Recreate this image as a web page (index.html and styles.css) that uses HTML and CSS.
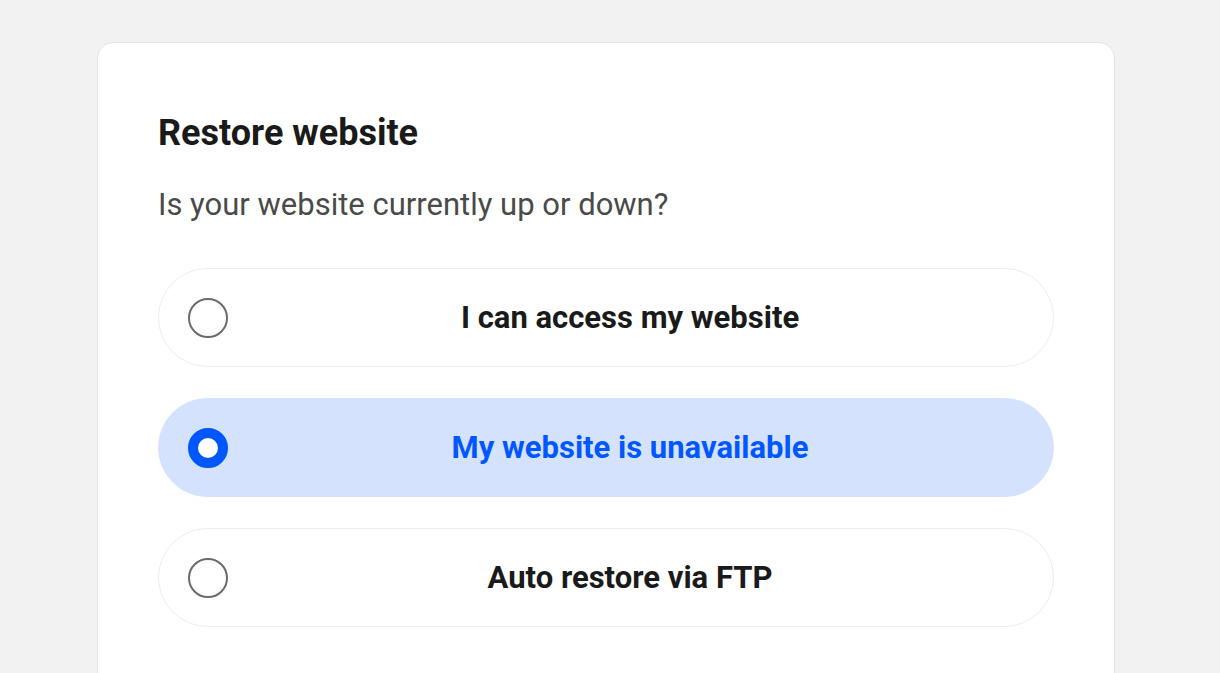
FILE: index.html
```html
<!DOCTYPE html>
<html lang="en">
<head>
    <meta charset="UTF-8">
    <meta name="viewport" content="width=device-width, initial-scale=1.0">
    <title>Restore website</title>
    <link rel="stylesheet" href="styles.css">
</head>
<body>

    <div class="restore-card">
        <h1>Restore website</h1>
        <p class="question">Is your website currently up or down?</p>

        <!-- Restore options -->
        <div class="option-list">
            <label class="option">
                <span class="radio"></span>
                <span class="option-label">I can access my website</span>
            </label>
            <label class="option selected">
                <span class="radio"></span>
                <span class="option-label">My website is unavailable</span>
            </label>
            <label class="option">
                <span class="radio"></span>
                <span class="option-label">Auto restore via FTP</span>
            </label>
        </div>
    </div>

</body>
</html>
```

FILE: styles.css
```css
body {
    font-family: 'Roboto', 'Liberation Sans', sans-serif;
    background-color: #f2f2f2;
    margin: 0;
    padding: 42px 0 0 97px;
    overflow: hidden;
}
.restore-card {
    box-sizing: border-box;
    width: 1018px;
    min-height: 700px;
    background-color: #ffffff;
    border: 1px solid #e3e3e3;
    border-radius: 16px;
    padding: 68px 60px 60px 60px;
}
h1 {
    margin: 0;
    font-size: 36px;
    line-height: 44px;
    font-weight: 700;
    color: #1a1a1a;
}
.question {
    margin: 30px 0 0 0;
    font-size: 31px;
    line-height: 40px;
    color: #4a4a4a;
}
.option-list {
    display: flex;
    flex-direction: column;
    gap: 31px;
    margin-top: 43px;
}
.option {
    box-sizing: border-box;
    display: flex;
    align-items: center;
    gap: 8px;
    height: 99px;
    padding: 0 29px;
    border: 1px solid #ececec;
    border-radius: 50px;
    cursor: pointer;
}
.radio {
    box-sizing: border-box;
    flex: none;
    width: 40px;
    height: 40px;
    border: 2px solid #6b6b6b;
    border-radius: 50%;
    background-color: #ffffff;
}
.option-label {
    flex: 1;
    text-align: center;
    font-size: 31px;
    font-weight: 700;
    color: #1a1a1a;
}
.option.selected {
    background-color: #d4e2fd;
    border-color: #d4e2fd;
}
.option.selected .radio {
    border: 10px solid #0057ff;
}
.option.selected .option-label {
    color: #0057ff;
}
```
